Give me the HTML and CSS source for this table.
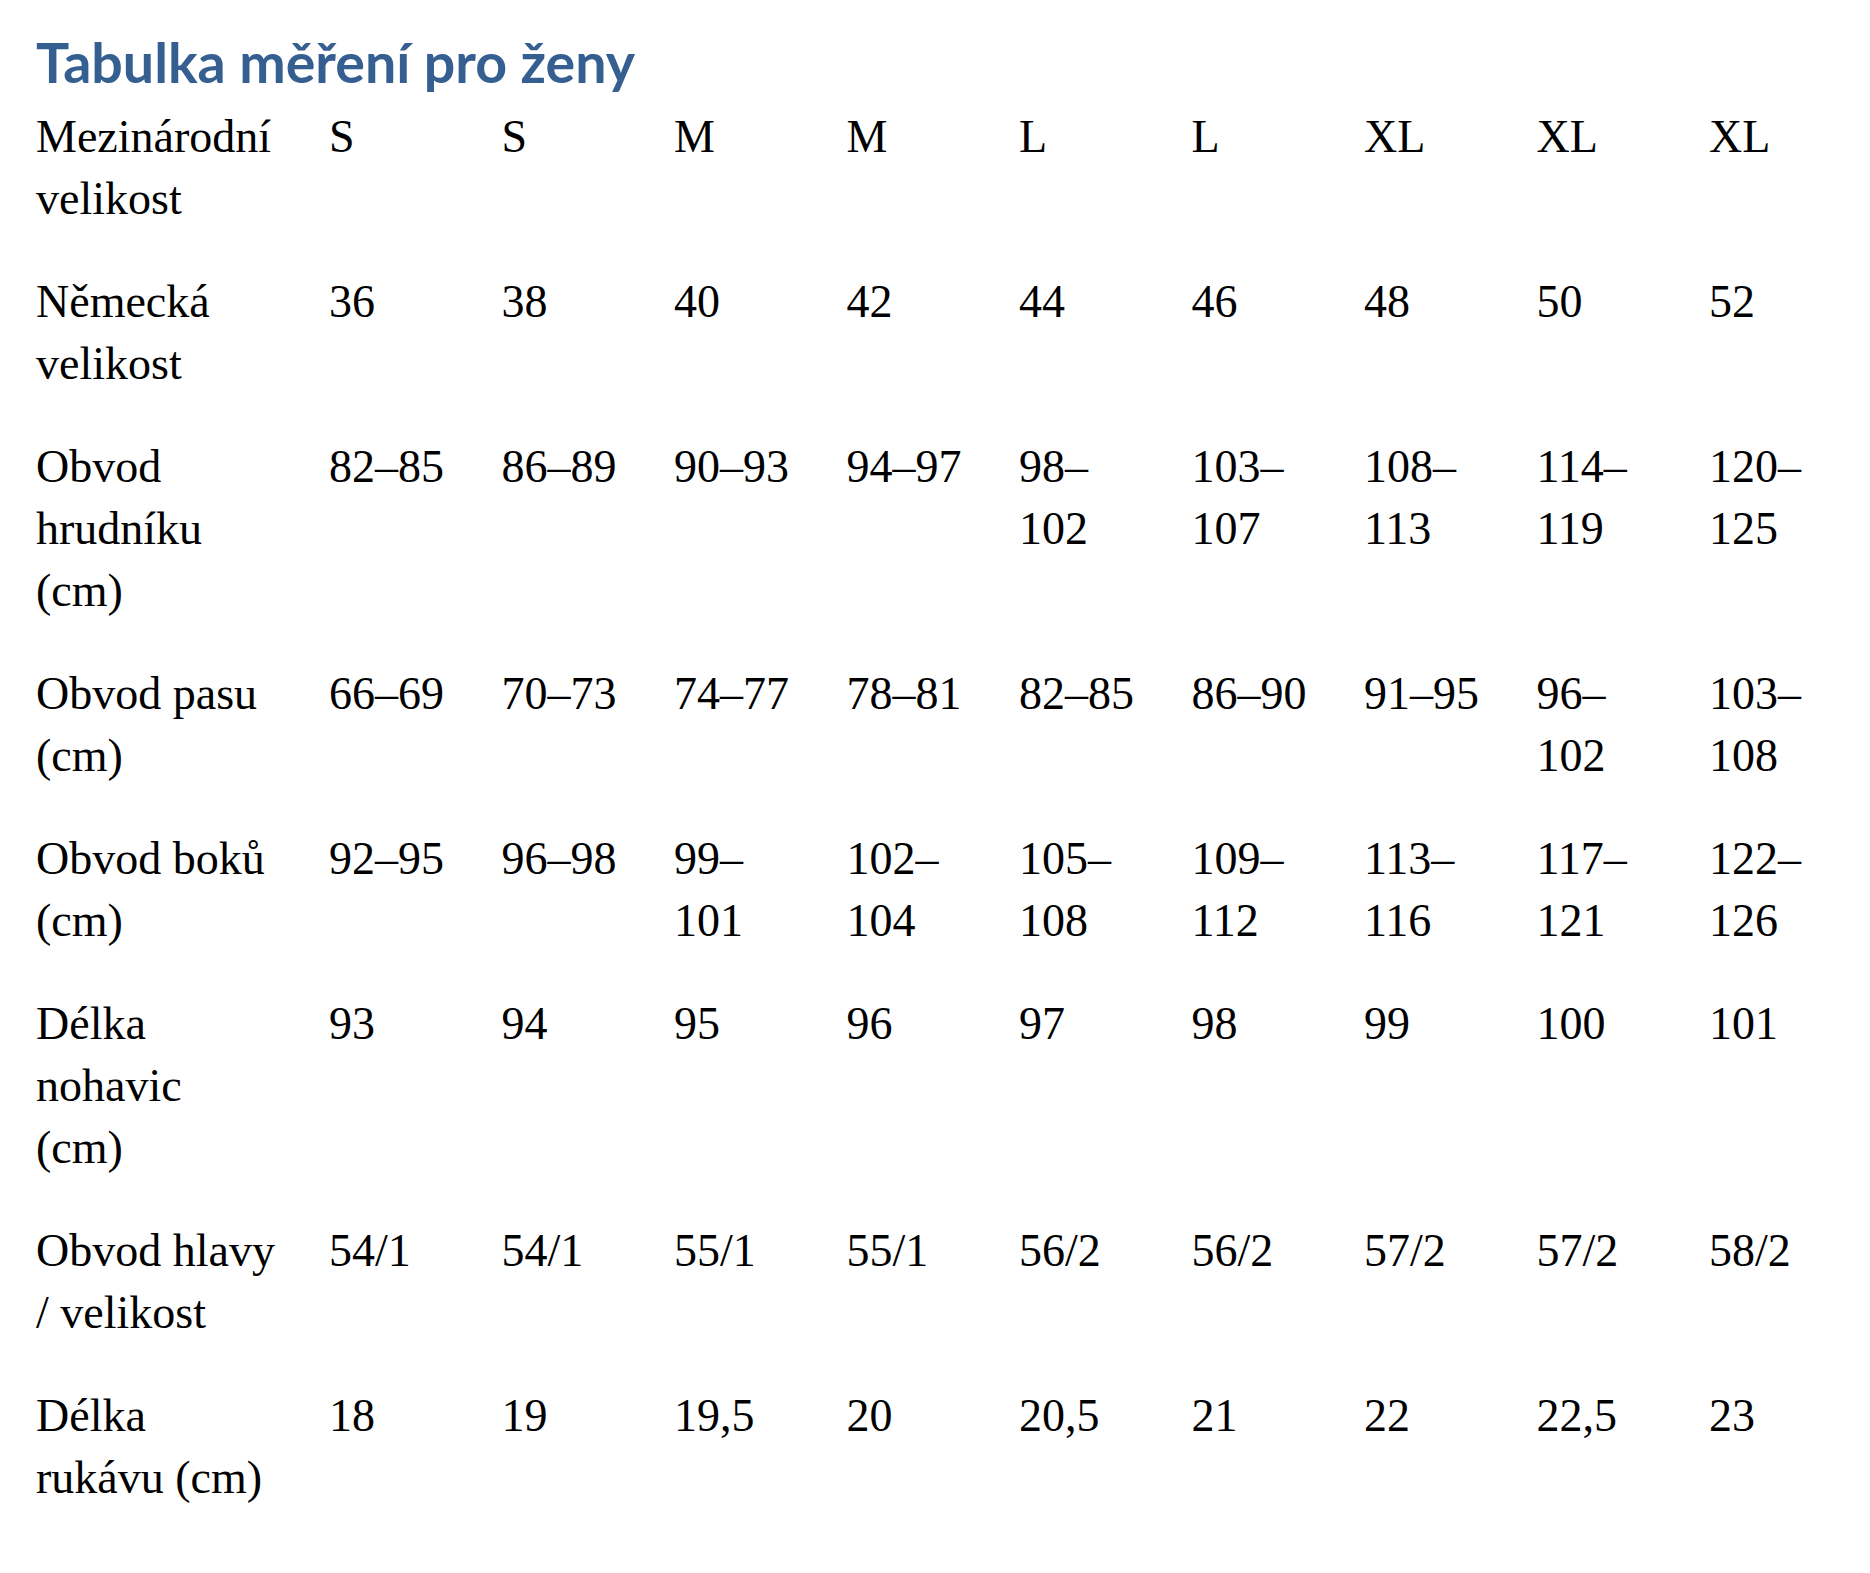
FILE: index.html
```html
<!DOCTYPE html>
<html lang="cs">
<head>
<meta charset="utf-8">
<title>Tabulka měření pro ženy</title>
<link rel="stylesheet" href="styles.css">
</head>
<body>
<main class="page">
  <h1 class="title">Tabulka měření pro ženy</h1>
  <table class="sizes">
    <colgroup>
      <col class="col-label">
      <col class="col-val"><col class="col-val"><col class="col-val"><col class="col-val">
      <col class="col-val"><col class="col-val"><col class="col-val"><col class="col-val">
      <col class="col-last">
    </colgroup>
    <tbody>
      <tr><td>Mezinárodní velikost</td><td>S</td><td>S</td><td>M</td><td>M</td><td>L</td><td>L</td><td>XL</td><td>XL</td><td>XL</td></tr>
      <tr><td>Německá velikost</td><td>36</td><td>38</td><td>40</td><td>42</td><td>44</td><td>46</td><td>48</td><td>50</td><td>52</td></tr>
      <tr><td>Obvod hrudníku (cm)</td><td>82–85</td><td>86–89</td><td>90–93</td><td>94–97</td><td>98–102</td><td>103–107</td><td>108–113</td><td>114–119</td><td>120–125</td></tr>
      <tr><td>Obvod pasu (cm)</td><td>66–69</td><td>70–73</td><td>74–77</td><td>78–81</td><td>82–85</td><td>86–90</td><td>91–95</td><td>96–102</td><td>103–108</td></tr>
      <tr><td>Obvod boků (cm)</td><td>92–95</td><td>96–98</td><td>99–101</td><td>102–104</td><td>105–108</td><td>109–112</td><td>113–116</td><td>117–121</td><td>122–126</td></tr>
      <tr><td>Délka nohavic (cm)</td><td>93</td><td>94</td><td>95</td><td>96</td><td>97</td><td>98</td><td>99</td><td>100</td><td>101</td></tr>
      <tr><td>Obvod hlavy / velikost</td><td>54/1</td><td>54/1</td><td>55/1</td><td>55/1</td><td>56/2</td><td>56/2</td><td>57/2</td><td>57/2</td><td>58/2</td></tr>
      <tr><td>Délka rukávu (cm)</td><td>18</td><td>19</td><td>19,5</td><td>20</td><td>20,5</td><td>21</td><td>22</td><td>22,5</td><td>23</td></tr>
    </tbody>
  </table>
</main>
</body>
</html>
```

FILE: styles.css
```css
html, body {
  margin: 0;
  padding: 0;
  background: #ffffff;
}

.page {
  padding: 30px 0 0 36px;
}

.title {
  margin: 0 0 12px 0;
  font-family: Lato, "Open Sans", "Noto Sans", sans-serif;
  font-weight: 700;
  font-size: 55.5px;
  line-height: 64px;
  color: #365f91;
}

.sizes {
  border-collapse: collapse;
  table-layout: fixed;
  width: 1803px;
  font-family: "Liberation Serif", "Times New Roman", serif;
  font-size: 46px;
  line-height: 62px;
  color: #000000;
}

.col-label { width: 293px; }
.col-val { width: 172.5px; }
.col-last { width: 130px; }

.sizes td {
  padding: 0 42.5px 41px 0;
  vertical-align: top;
  text-align: left;
}

.sizes td:first-child {
  padding-right: 52px;
}

.sizes td:last-child {
  padding-right: 0;
}
```
